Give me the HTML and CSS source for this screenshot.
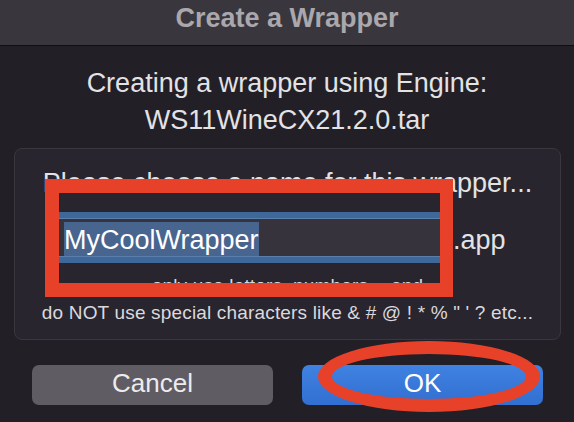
FILE: index.html
```html
<!DOCTYPE html>
<html>
<head>
    <title>Create a Wrapper</title>
    <meta name="viewport" content="width=device-width, initial-scale=1.0">
    <link rel="stylesheet" href="styles.css">
</head>
<body>
    <div class="dialog">
        <div class="titlebar">Create a Wrapper</div>

        <div class="intro">
            <div>Creating a wrapper using Engine:</div>
            <div>WS11WineCX21.2.0.tar</div>
        </div>

        <div class="panel">
            <div class="prompt">Please choose a name for this wrapper...</div>
            <div class="name-row">
                <div class="name-field"><span class="selected">MyCoolWrapper</span></div>
                <div class="suffix">.app</div>
            </div>
            <div class="hint">
                <div>only use letters, numbers, - and</div>
                <div>do NOT use special characters like &amp; # @ ! * % " ' ? etc...</div>
            </div>
        </div>

        <div class="buttons">
            <button class="btn btn-cancel">Cancel</button>
            <button class="btn btn-ok">OK</button>
        </div>

        <!-- annotations drawn over the dialog -->
        <div class="mark-rect"></div>
        <div class="mark-ellipse"></div>
    </div>
</body>
</html>
```

FILE: styles.css
```css
body { margin: 0; background-color: #221f27; font-family: "Liberation Sans", Arial, sans-serif; }
.dialog { position: relative; width: 574px; height: 422px; overflow: hidden; background-color: #221f27; color: #e3e2e5; }

.titlebar { height: 36px; line-height: 36px; padding-bottom: 9px; text-align: center; font-size: 27px; font-weight: bold;
            color: #aaa8ad; background-color: #39373d; border-bottom: 1px solid #0f0e12; }

.intro { margin-top: 19px; text-align: center; font-size: 27px; line-height: 37px; }

.panel { margin: 9px 13px 0 14px; border: 1px solid #3a3740; border-radius: 8px; background-color: #29252e;
         padding: 16px 0 13px 0; }
.prompt { text-align: center; font-size: 27px; line-height: 37px; white-space: nowrap; }

.name-row { display: flex; margin-top: 16px; padding-left: 37px; }
.name-field { width: 382px; height: 37px; padding-left: 11px; border: 1px solid #5a7fa9; background-color: #37333c;
              box-shadow: 0 0 0 6px #3e6899; display: flex; align-items: flex-end; }
.selected { height: 34px; line-height: 36px; font-size: 27px; color: #ffffff; background-color: #486590; overflow: hidden; }
.suffix { margin-left: 6px; padding-top: 3px; line-height: 39px; font-size: 27px; }

.hint { margin-top: 12px; text-align: center; font-size: 19px; line-height: 27px; letter-spacing: 0.17px; color: #dbd9dd; white-space: nowrap; }

.buttons { display: flex; gap: 29px; margin-top: 25px; padding-left: 32px; }
.btn { width: 241px; height: 40px; line-height: 36px; padding: 0 0 4px 0; border: none; border-radius: 7px;
       font-family: "Liberation Sans", Arial, sans-serif; font-size: 26px; color: #ecebee; }
.btn-cancel { background-color: #5f5c63; }
.btn-ok { background: linear-gradient(#3f82e2, #326fd0); color: #ffffff; }

.mark-rect { position: absolute; left: 45px; top: 179px; width: 408px; height: 118px; box-sizing: border-box;
             border: 14px solid #e8412a; border-right-width: 13px; }
.mark-ellipse { position: absolute; left: 318px; top: 341px; width: 222px; height: 71px; box-sizing: border-box;
                border: 13px solid #e8412a; border-left-width: 14px; border-right-width: 14px; border-radius: 50%; }
```
